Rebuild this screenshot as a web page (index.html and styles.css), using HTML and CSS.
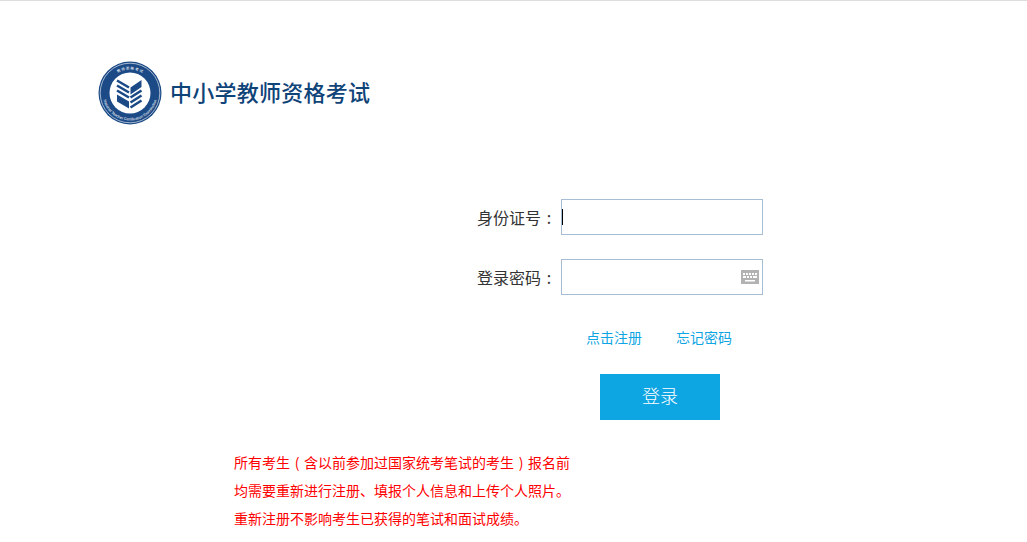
FILE: index.html
```html
<!DOCTYPE html>
<html lang="zh-CN">
<head>
  <meta charset="UTF-8" />
  <title>中小学教师资格考试</title>
  <link rel="stylesheet" href="styles.css">
</head>
<body>
  <div class="logo">
    <svg class="seal" viewBox="0 0 64 64" width="64" height="64" aria-hidden="true">
      <defs>
        <path id="sealTop" d="M8.500 32a23.500 23.500 0 0 1 47 0"/>
        <path id="sealBottom" d="M5.700 24a27.500 27.500 0 1 0 52.600 0"/>
      </defs>
      <circle cx="32" cy="32" r="31.500" fill="#1b4a86"/>
      <circle cx="32" cy="32" r="29.800" fill="none" stroke="#fff" stroke-width=".6"/>
      <circle cx="32" cy="32" r="20.500" fill="#fff"/>
      <text class="seal-top"><textPath href="#sealTop" startOffset="50%" text-anchor="middle">教 师 资 格 考 试</textPath></text>
      <text class="seal-bottom"><textPath href="#sealBottom" startOffset="50%" text-anchor="middle">National Teacher Certification Examination</textPath></text>
      <path d="M19 19.500l12 7M19 24.500l12 7M19 29.500l12 7" stroke="#1b4a86" stroke-width="2.600" fill="none"/>
      <path d="M19 33.500l12 7v7l-12-7z" fill="#1b4a86"/>
      <path d="M32.500 26.500l11-7.500v7l-11 7.500z" fill="#1b4a86"/>
      <path d="M32.500 36.500l11-7M32.500 41.500l11-7M32.500 46.500l11-7" stroke="#1b4a86" stroke-width="2.600" fill="none"/>
    </svg>
    <span class="logo-title">中小学教师资格考试</span>
  </div>

  <form class="login-form">
    <div class="form-row">
      <label class="form-label">身份证号<span class="punct">:</span></label>
      <div class="form-input"><span class="caret"></span></div>
    </div>
    <div class="form-row">
      <label class="form-label">登录密码<span class="punct">:</span></label>
      <div class="form-input form-input-key">
        <svg class="key-icon" viewBox="0 0 18 14" width="18" height="14" aria-hidden="true">
          <rect width="18" height="14" fill="#b2b2b2"/>
          <path d="M2 3h2v2H2zM5 3h2v2H5zM8 3h2v2H8zM11 3h2v2h-2zM14 3h2v2h-2zM2 6h3v2H2zM6 6h2v2H6zM9 6h2v2H9zM12 6h4v2h-4zM4 10h10v1.500H4z" fill="#fff"/>
        </svg>
      </div>
    </div>
    <div class="form-links">
      <a class="link" href="#">点击注册</a>
      <a class="link" href="#">忘记密码</a>
    </div>
    <button class="login-btn" type="button">登录</button>
  </form>

  <div class="notice">
    <p>所有考生<span class="punct">(</span>含以前参加过国家统考笔试的考生<span class="punct">)</span>报名前</p>
    <p>均需要重新进行注册、填报个人信息和上传个人照片。</p>
    <p>重新注册不影响考生已获得的笔试和面试成绩。</p>
  </div>
</body>
</html>
```

FILE: styles.css
```css
body {
  margin: 0;
  border-top: 1px solid #ddd;
  background: #fff;
  color: #333;
  font-family: "Noto Sans CJK SC", "Liberation Sans", sans-serif;
  font-size: 16px;
}

/* Logo */
.logo {
  display: flex;
  align-items: center;
  gap: 8px;
  padding: 60px 0 0 98px;
}
.logo-title {
  margin-top: -4px;
  color: #0f4479;
  font-size: 22px;
  font-weight: 500;
  letter-spacing: .25px;
  line-height: 64px;
}
.seal-top {
  fill: #fff;
  font-size: 3.600px;
}
.seal-bottom {
  fill: #fff;
  font-family: "Liberation Sans", sans-serif;
  font-size: 3.800px;
}

/* Login form */
.login-form {
  margin: 74px 0 0 0;
  display: flex;
  flex-direction: column;
}
.form-row {
  display: flex;
  align-items: center;
  height: 36px;
  margin-bottom: 24px;
  padding-left: 477px;
}
.form-label {
  width: 84px;
  white-space: nowrap;
  line-height: 36px;
}
.punct {
  display: inline-block;
  width: 1em;
  text-align: center;
}
.form-input {
  box-sizing: border-box;
  width: 202px;
  height: 36px;
  border: 1px solid #a7bdd3;
  display: flex;
  align-items: center;
  justify-content: space-between;
}
.caret {
  width: 1px;
  height: 16px;
  background: #000;
}
.form-input-key {
  justify-content: flex-end;
  padding-right: 3px;
}
.form-links {
  display: flex;
  gap: 34px;
  padding-left: 586px;
  margin-top: 6px;
  line-height: 24px;
}
.link {
  color: #0ea5e3;
  font-size: 14px;
  text-decoration: none;
}
.login-btn {
  width: 120px;
  height: 46px;
  margin: 25px 0 0 600px;
  padding: 0 0 4px;
  border: none;
  background: #0ea5e3;
  color: #fff;
  font-family: inherit;
  font-size: 18px;
  font-weight: 300;
  cursor: pointer;
}

/* Red notice */
.notice {
  margin: 28px 0 0 234px;
  color: #f00;
  font-size: 14px;
  line-height: 28px;
}
.notice p {
  margin: 0;
}
```
